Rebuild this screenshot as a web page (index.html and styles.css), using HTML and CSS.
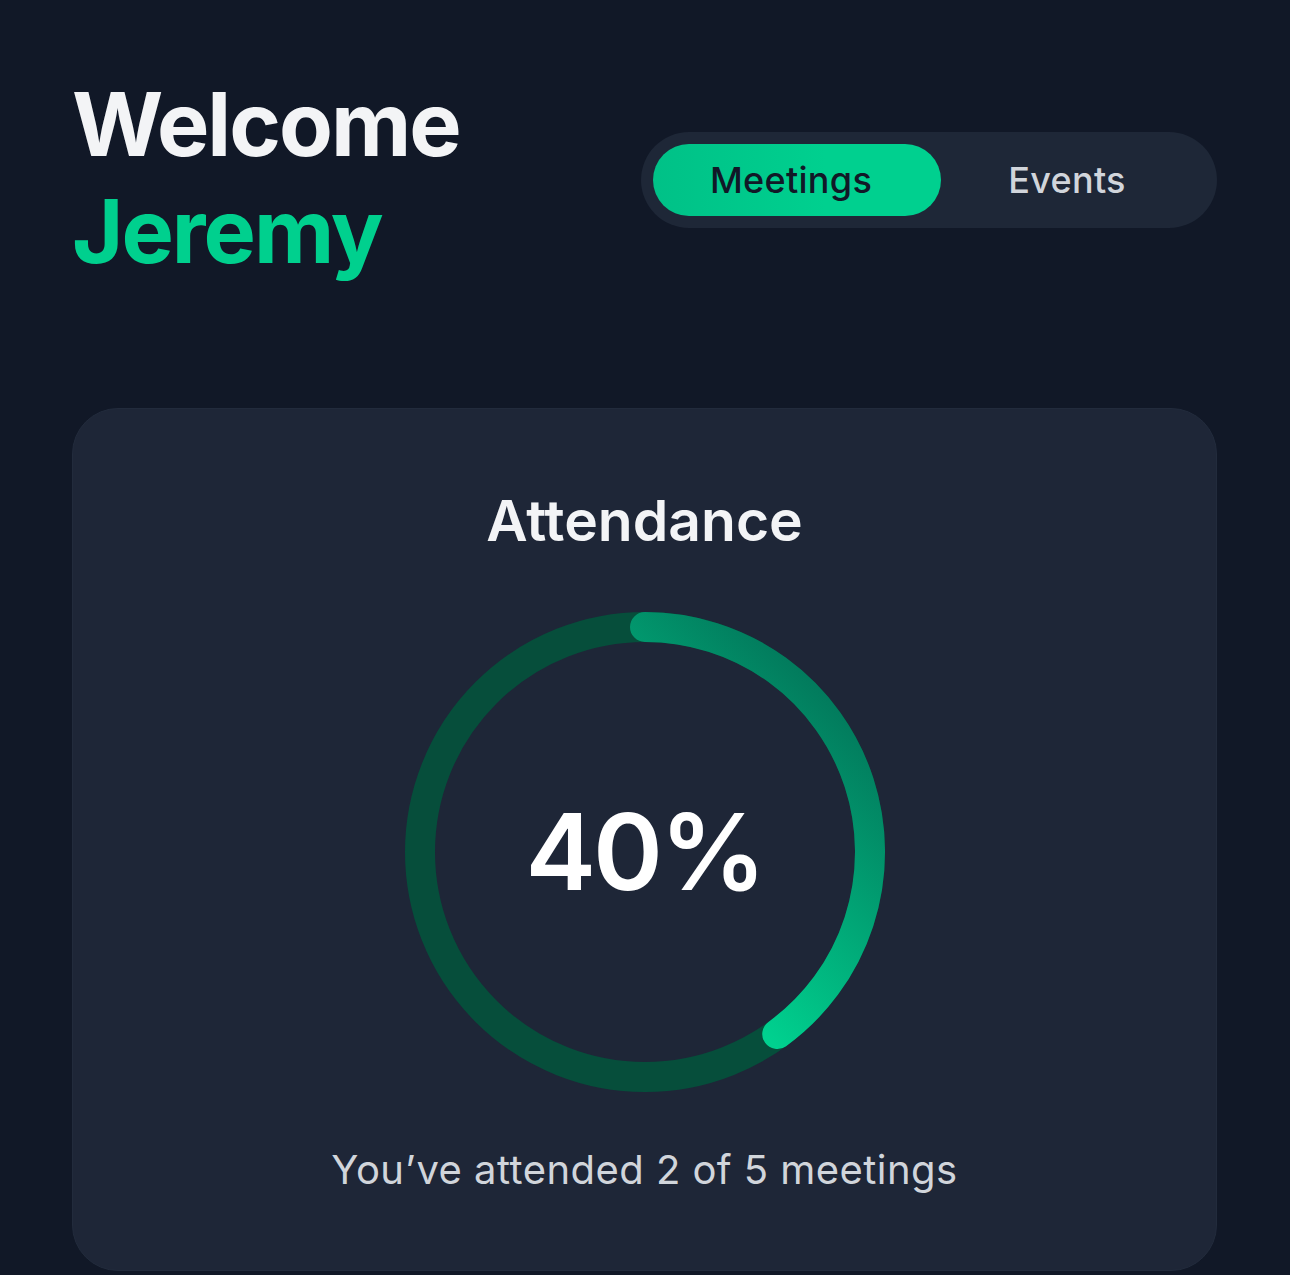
FILE: index.html
```html
<!DOCTYPE html>
<html lang="en">
<head>
<meta charset="utf-8">
<title>Welcome Jeremy</title>
<link rel="stylesheet" href="styles.css">
</head>
<body>
<main class="page">
  <header class="header">
    <h1 class="greeting">
      <span class="greeting-line">Welcome</span>
      <span class="greeting-name">Jeremy</span>
    </h1>
    <nav class="toggle">
      <button class="toggle-btn is-active">Meetings</button>
      <button class="toggle-btn">Events</button>
    </nav>
  </header>

  <section class="card">
    <h2 class="card-title">Attendance</h2>
    <div class="ring">
      <svg class="ring-svg" width="480" height="480" viewBox="0 0 480 480">
        <defs>
          <linearGradient id="prog" gradientUnits="userSpaceOnUse" x1="465" y1="15" x2="15" y2="465">
            <stop offset="0" stop-color="#03704f"/>
            <stop offset="0.12" stop-color="#027a5c"/>
            <stop offset="0.57" stop-color="#00d18f"/>
            <stop offset="1" stop-color="#00d18f"/>
          </linearGradient>
        </defs>
        <circle cx="240" cy="240" r="225" fill="none" stroke="#064e3b" stroke-width="30"/>
        <path d="M 240 15 A 225 225 0 0 1 372.25 422.03" fill="none" stroke="url(#prog)"
              stroke-width="30" stroke-linecap="round"/>
      </svg>
      <div class="ring-value">40%</div>
    </div>
    <p class="card-caption">You’ve attended 2 of 5 meetings</p>
  </section>
</main>
</body>
</html>
```

FILE: styles.css
```css
* {
  box-sizing: border-box;
}

html, body {
  margin: 0;
  padding: 0;
}

body {
  background: #111827;
  font-family: "Inter", "Liberation Sans", sans-serif;
  color: #f3f4f6;
  min-height: 1275px;
}

.page {
  padding: 71px 73px 0 72px;
}

.header {
  display: flex;
  justify-content: space-between;
  align-items: center;
}

.greeting {
  margin: 0;
  font-size: 88px;
  line-height: 107px;
  font-weight: 700;
  letter-spacing: -2px;
  display: flex;
  flex-direction: column;
}

.greeting-line {
  color: #f3f4f6;
}

.greeting-name {
  color: #00d08e;
}

.toggle {
  width: 576px;
  height: 96px;
  display: flex;
  padding: 12px 24px 12px 12px;
  background: #1e2737;
  border-radius: 48px;
  margin-top: 4px;
}

.toggle-btn {
  border: none;
  background: transparent;
  font-family: inherit;
  font-size: 36px;
  font-weight: 500;
  color: #d1d5db;
  border-radius: 36px;
  padding: 0;
  height: 72px;
  flex: 1;
  letter-spacing: 0.3px;
}

.toggle-btn.is-active {
  flex: 0 0 288px;
  padding-right: 12px;
  color: #111827;
  background: linear-gradient(90deg, #00c187 0%, #00d08f 60%);
}

.card {
  margin-top: 123px;
  background: #1e2637;
  border: 1px solid #222b3c;
  border-radius: 46px;
  padding: 78px 0 76px;
  display: flex;
  flex-direction: column;
  align-items: center;
  height: 863px;
}

.card-title {
  margin: 0;
  font-size: 57px;
  line-height: 68px;
  font-weight: 600;
  color: #f3f4f6;
  letter-spacing: 0;
}

.ring {
  margin-top: 57px;
  width: 480px;
  height: 480px;
  display: grid;
  place-items: center;
}

.ring-svg {
  grid-area: 1 / 1;
  display: block;
}

.ring-value {
  grid-area: 1 / 1;
  font-size: 106px;
  line-height: 1;
  font-weight: 600;
  color: #ffffff;
  letter-spacing: -3px;
}

.card-caption {
  margin: 54px 0 0;
  font-size: 40px;
  line-height: 48px;
  font-weight: 400;
  color: #d1d5db;
  letter-spacing: 0.45px;
}
```
